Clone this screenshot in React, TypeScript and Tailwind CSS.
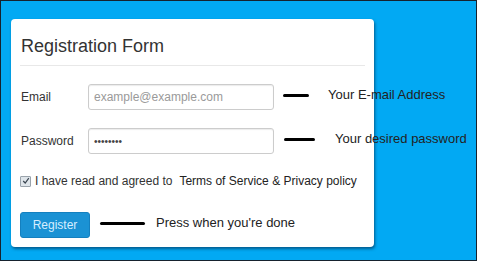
import React from 'react';

const Dash = ({ width }: { width: string }) => (
  <span className={`block h-[3px] rounded-full bg-black ${width}`} />
);

export default function App() {
  return (
    <div
      className="h-[261px] w-[477px] overflow-hidden border border-[#16222e] bg-[#02a9f3] pl-[10px] pt-[18px]"
      style={{ fontFamily: '"Liberation Sans", Arial, sans-serif' }}
    >
      <div className="h-[228px] w-[363px] rounded-[4px] bg-white px-[9px] pt-[16px] shadow-[1px_2px_3px_rgba(0,30,60,0.55)]">
        <h1 className="border-b border-[#e8e8e8] pb-[8px] pl-[1px] text-[18px] leading-[22px] text-[#333]">
          Registration Form
        </h1>

        {/* email row */}
        <div className="mt-[18px] flex items-center">
          <label className="w-[68px] shrink-0 pl-[1px] text-[12px] text-[#333]">Email</label>
          <input
            type="text"
            placeholder="example@example.com"
            className="h-[26px] w-[186px] shrink-0 rounded-[3px] border border-[#ccc] pl-[5px] text-[12px] text-[#555] shadow-[inset_0_1px_1px_rgba(0,0,0,0.08)] outline-none placeholder:text-[#9a9a9a]"
          />
          <div className="-mt-[4px] flex shrink-0 items-center whitespace-nowrap">
            <span className="ml-[9px]">
              <Dash width="w-[26px]" />
            </span>
            <span className="ml-[19px] text-[13px] text-[#222]">Your E-mail Address</span>
          </div>
        </div>

        {/* password row */}
        <div className="mt-[18px] flex items-center">
          <label className="w-[68px] shrink-0 pl-[1px] text-[12px] text-[#333]">Password</label>
          <input
            type="password"
            defaultValue="password"
            className="h-[26px] w-[186px] shrink-0 rounded-[3px] border border-[#ccc] pl-[5px] text-[10px] text-[#444] shadow-[inset_0_1px_1px_rgba(0,0,0,0.08)] outline-none"
          />
          <div className="-mt-[4px] flex shrink-0 items-center whitespace-nowrap">
            <span className="ml-[10px]">
              <Dash width="w-[31px]" />
            </span>
            <span className="ml-[20px] text-[13px] text-[#222]">Your desired password</span>
          </div>
        </div>

        {/* agreement */}
        <div className="mt-[19px] flex items-center whitespace-nowrap text-[12px] leading-[16px] text-[#333]">
          <span className="flex h-[11px] w-[11px] shrink-0 items-center justify-center rounded-[1px] border border-[#9aa3ab] bg-[#dfe5ea]">
            <svg viewBox="0 0 10 10" className="h-[8px] w-[8px]">
              <path d="M1.5 5 L4 7.5 L8.5 1.5" fill="none" stroke="#3a4550" strokeWidth="1.5" />
            </svg>
          </span>
          <span className="ml-[4px]">I have read and agreed to</span>
          <span className="ml-[7px] text-[#222]">Terms of Service &amp; Privacy policy</span>
        </div>

        {/* submit row */}
        <div className="mt-[23px] flex items-center">
          <button className="h-[26px] w-[70px] shrink-0 rounded-[3px] border border-[#1580bf] bg-[#1b92d4] text-[12px] text-[#d6eeff]">
            Register
          </button>
          <div className="-mt-[5px] flex shrink-0 items-center whitespace-nowrap">
            <span className="ml-[10px] mt-[2px]">
              <Dash width="w-[45px]" />
            </span>
            <span className="ml-[11px] text-[13px] text-[#222]">Press when you&apos;re done</span>
          </div>
        </div>
      </div>
    </div>
  );
}
